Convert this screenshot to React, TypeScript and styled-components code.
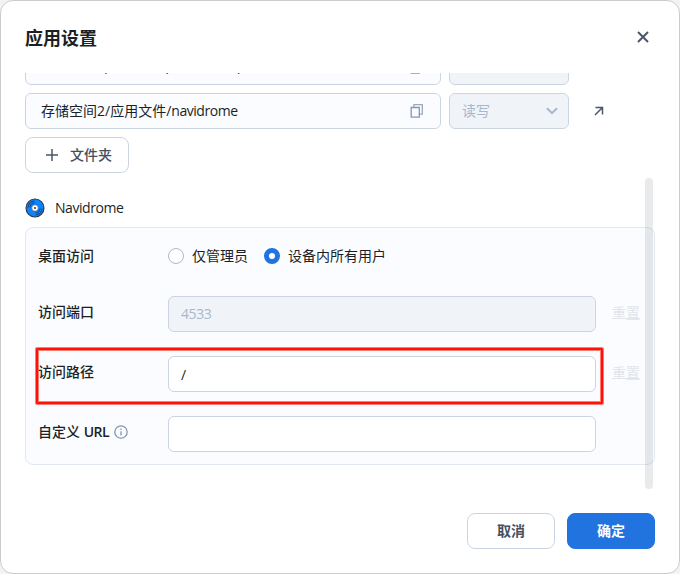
import React from 'react';
import styled, { createGlobalStyle, css } from 'styled-components';

const Global = createGlobalStyle`
  * { box-sizing: border-box; }
  body { margin: 0; background: #f3f3f3; font: 14px/20px "Open Sans", "Noto Sans CJK SC", sans-serif; color: #1c1f23; }
  button, input { font: inherit; }
`;

const Dialog = styled.section`
  width: 680px; height: 574px; padding: 24px; overflow: hidden;
  display: flex; flex-direction: column;
  background: #fff; border: 1px solid #ccc; border-radius: 13px;
`;
const Header = styled.header`
  height: 24px; flex: none; display: flex; align-items: center; justify-content: space-between;
`;
const Title = styled.h1`
  margin: 0; padding-top: 1px; font-size: 18px; line-height: 24px; font-weight: 700;
`;
const IconButton = styled.button`
  width: 24px; height: 24px; padding: 0; border: 0; background: none; color: #4b5669;
  display: grid; place-items: center;
  svg { display: block; }
`;
const Body = styled.main`
  position: relative; flex: none; height: 416px; margin-top: 24px; overflow: hidden;
`;
const Content = styled.div`
  display: flex; flex-direction: column; align-items: stretch; margin-top: -24px;
`;
const FolderRow = styled.div`
  display: flex; align-items: center; height: 36px; margin-bottom: 8px; gap: 8px;
`;
const box = css`
  height: 36px; border: 1px solid #cbd5e1; border-radius: 6px; display: flex; align-items: center;
`;
const PathField = styled.div`
  ${box} width: 416px; padding: 0 16px 0 15px; background: #fafcff; justify-content: space-between;
`;
const Latin = styled.span<{ $bold?: boolean }>`
  letter-spacing: -.45px; font-weight: ${p => (p.$bold ? 600 : 'inherit')};
`;
const RaisedPath = styled.span`
  display: block; padding-bottom: 6px;
`;
const Slash = styled.span`
  display: inline-block; transform: translateY(5px);
`;
const Access = styled.div`
  ${box} width: 120px; padding: 0 10px 0 12px; background: #f0f4f9; color: #a7b7cc; justify-content: space-between;
`;
const OpenLink = styled(IconButton)`margin-left: 10px;`;
const Button = styled.button<{ $primary?: boolean; $width: number; $inset?: number }>`
  width: ${p => p.$width}px; height: 36px; padding: 0 0 0 ${p => p.$inset ?? 0}px; border-radius: 8px;
  display: flex; align-items: center; justify-content: center; gap: 12px; font-weight: 500;
  border: 1px solid ${p => (p.$primary ? '#2173df' : '#cbd5e1')};
  background: ${p => (p.$primary ? '#2173df' : '#fff')};
  color: ${p => (p.$primary ? '#fff' : '#454f5e')};
`;
const AppRow = styled.div`
  display: flex; align-items: center; gap: 10px; height: 20px; margin: 25px 0 9px;
`;
const Panel = styled.div`
  height: 238px; padding: 10px 14px 12px 12px; border: 1px solid #e1e8f0; border-radius: 8px; background: #fafcff;
`;
const FormRow = styled.div<{ $gap?: number }>`
  display: flex; height: 36px; margin-bottom: ${p => p.$gap ?? 24}px;
`;
const Label = styled.label<{ $height?: number }>`
  width: 130px; height: ${p => p.$height ?? 32}px; flex: none; display: flex; align-items: center; gap: 5px; font-weight: 500;
`;
const RadioGroup = styled.div`display: flex; gap: 16px; height: 36px; align-items: center;`;
const Radio = styled.label`display: flex; align-items: center; gap: 8px;`;
const Dot = styled.span<{ $on?: boolean }>`
  width: 16px; height: 16px; border-radius: 50%; background: #fff;
  border: ${p => (p.$on ? '5px solid #2173df' : '1px solid #a9b8cc')};
`;
const Input = styled.input`
  ${box} width: 428px; padding: 1px 12px 0; background: #fff; color: #1c1f23; outline: none; letter-spacing: -.4px;
  &:disabled { padding: 0 12px 1px; background: #f0f4f9; color: #a7b7cc; }
`;
const Reset = styled.a`
  margin-left: 16px; line-height: 33px; color: #e1e4ea;
  text-decoration: underline; text-underline-offset: 0; text-decoration-skip-ink: none;
`;
const ScrollThumb = styled.div`
  position: absolute; right: 2px; top: 105px; width: 8px; height: 311px; border-radius: 4px; background: rgba(29, 46, 72, .1);
`;
const Highlight = styled.div`
  position: absolute; left: 11px; top: 275px; width: 567px; height: 56px; border: 2px solid #ff1205; border-radius: 1px;
  box-shadow: 0 0 0 1px rgba(255, 18, 5, .55), inset 0 0 0 1px rgba(255, 18, 5, .55);
`;
const Footer = styled.footer`
  display: flex; justify-content: flex-end; gap: 12px; margin-top: 24px;
  button { font-weight: 700; }
`;

const CopyIcon = () => (
  <svg width="14" height="16" viewBox="0 0 14 16" fill="none" stroke="#8496b2" strokeWidth="1.3">
    <path d="M3.9 4V1.7h8.4v9.4H9.8" stroke="#9aa9c0" /><path d="M1.2 4.5h8.1v9.6H1.2z" fill="#fafcff" />
  </svg>
);
const Chevron = () => (
  <svg width="12" height="8" viewBox="0 0 12 8" fill="none" stroke="#a7b7cc" strokeWidth="2"><path d="M1 1.2l5 5 5-5" /></svg>
);
const Disc = () => (
  <svg width="20" height="20" viewBox="0 0 20 20" fill="none">
    <circle cx="10" cy="10" r="9" fill="#0b84ff" stroke="#2b3848" strokeWidth="1.1" />
    <g stroke="#143d70" strokeWidth=".9">
      <path d="M3 9.5A7.2 7.2 0 0 1 9.5 3M4.8 9.5A5.4 5.4 0 0 1 9.5 4.8M17 10.5A7.2 7.2 0 0 1 10.5 17M15.2 10.5A5.4 5.4 0 0 1 10.5 15.2" />
    </g>
    <circle cx="10" cy="10" r="3.3" fill="#fff" stroke="#38485c" strokeWidth=".6" /><circle cx="10" cy="10" r="1.1" fill="#33465c" />
  </svg>
);
const Info = () => (
  <svg width="14" height="14" viewBox="0 0 14 14" fill="none" stroke="#8496b2" strokeWidth="1.3">
    <circle cx="7" cy="7" r="6.2" /><path d="M7 6.2v4.2M7 3.6v1.4" />
  </svg>
);

export default function App() {
  return (
    <>
      <Global />
      <Dialog>
        <Header>
          <Title>应用设置</Title>
          <IconButton aria-label="关闭">
            <svg width="12" height="12" viewBox="0 0 12 12" stroke="#4b5669" strokeWidth="2"><path d="M1 1l10 10M11 1L1 11" /></svg>
          </IconButton>
        </Header>
        <Body>
          <Content>
            <FolderRow>
              <PathField>
                <RaisedPath>存储空间2<Slash>/</Slash>应用文件<Slash>/</Slash><Latin>navidrome</Latin><Slash>/</Slash></RaisedPath>
                <CopyIcon />
              </PathField>
              <Access />
            </FolderRow>
            <FolderRow>
              <PathField><span>存储空间2/应用文件/<Latin>navidrome</Latin></span><CopyIcon /></PathField>
              <Access>读写<Chevron /></Access>
              <OpenLink aria-label="打开">
                <svg width="10" height="10" viewBox="0 0 10 10" fill="none" stroke="#4b5669" strokeWidth="1.5"><path d="M1.5 1.5h7v7M8.5 1.5L1 9" /></svg>
              </OpenLink>
            </FolderRow>
            <Button $width={104} $inset={4}>
              <svg width="12" height="12" viewBox="0 0 12 12" stroke="#4b5669" strokeWidth="1.5"><path d="M0 6h12M6 0v12" /></svg>
              文件夹
            </Button>
            <AppRow><Disc /><Latin>Navidrome</Latin></AppRow>
            <Panel>
              <FormRow $gap={22}>
                <Label $height={36}>桌面访问</Label>
                <RadioGroup><Radio><Dot />仅管理员</Radio><Radio><Dot $on />设备内所有用户</Radio></RadioGroup>
              </FormRow>
              <FormRow><Label>访问端口</Label><Input disabled value="4533" /><Reset>重置</Reset></FormRow>
              <FormRow><Label>访问路径</Label><Input defaultValue="/" /><Reset>重置</Reset></FormRow>
              <FormRow><Label><span>自定义 <Latin $bold>URL</Latin></span><Info /></Label><Input /></FormRow>
            </Panel>
          </Content>
          <ScrollThumb />
          <Highlight />
        </Body>
        <Footer><Button $width={88}>取消</Button><Button $width={88} $primary>确定</Button></Footer>
      </Dialog>
    </>
  );
}
